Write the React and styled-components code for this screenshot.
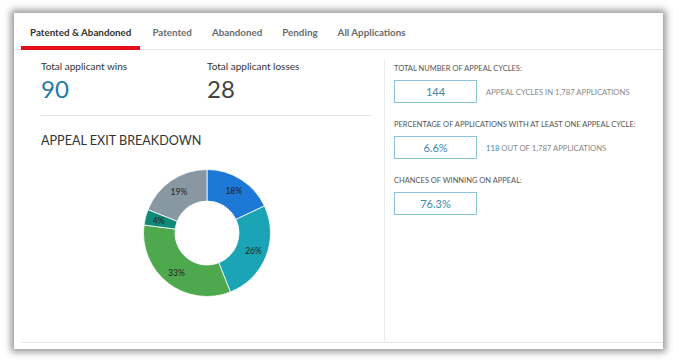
import React from "react"
import styled, { createGlobalStyle } from "styled-components"

const GlobalStyle = createGlobalStyle`
  html, body {
    margin: 0;
    padding: 0;
    background: #ffffff;
    font-family: Lato, "Liberation Sans", sans-serif;
  }
`;

const Page = styled.div`
  width: 678px;
  height: 360px;
  padding: 13px 15px 0 14px;
  box-sizing: border-box;
`;

const Card = styled.div`
  width: 649px;
  height: 336px;
  background: #fff;
  box-shadow: 0 0 7px 3px rgba(0, 0, 0, 0.42);
  display: flex;
  flex-direction: column;
  box-sizing: border-box;
  padding-bottom: 6px;
`;

const TabBar = styled.div`
  display: flex;
  height: 37px;
  padding-left: 7px;
  border-bottom: 1px solid #e6e6e6;
  box-sizing: border-box;
`;

const Tab = styled.div`
  position: relative;
  display: flex;
  align-items: center;
  padding: 1px ${({ first }) => (first ? "9px" : "10px")} 0;
  margin-right: ${({ first }) => (first ? "2px" : "0")};
  font-size: 9.8px;
  font-weight: 700;
  color: ${({ active }) => (active ? "#333" : "#6b6b6b")};
  white-space: nowrap;

  &::after {
    content: "";
    display: ${({ active }) => (active ? "block" : "none")};
    position: absolute;
    left: 0;
    right: 0;
    bottom: -1px;
    height: 4px;
    background: #e3101c;
  }
`;

const Content = styled.div`
  flex: 1;
  display: flex;
  margin-left: 7px;
  border-bottom: 1px solid #e8e8e8;
`;

const LeftCol = styled.div`
  flex: 0 0 363px;
  box-sizing: border-box;
  padding: 10px 12px 0 20px;
  display: flex;
  flex-direction: column;
`;

const StatRow = styled.div`
  display: flex;
`;

const Stat = styled.div`
  width: ${({ w }) => w}px;
`;

const StatLabel = styled.div`
  font-size: 10px;
  line-height: 12px;
  color: #333;
`;

const StatValue = styled.div`
  margin-top: 3px;
  font-size: 24px;
  line-height: 28px;
  color: ${({ tone }) => tone};
`;

const Divider = styled.div`
  margin-top: 12px;
  height: 1px;
  background: #e8e8e8;
`;

const SectionTitle = styled.div`
  margin-top: 17px;
  font-size: 12.6px;
  line-height: 16px;
  color: #333;
`;

const ChartWrap = styled.div`
  margin-top: 20px;
  display: flex;
  justify-content: center;
`;

const RightCol = styled.div`
  flex: 1;
  margin-top: 9px;
  border-left: 1px solid #ececec;
  padding: 5px 0 0 9px;
  display: flex;
  flex-direction: column;
  gap: 17px;
`;

const Metric = styled.div`
  display: flex;
  flex-direction: column;
  gap: 6px;
`;

const MetricLabel = styled.div`
  font-size: 7.5px;
  line-height: 10px;
  color: #555;
  text-transform: uppercase;
  white-space: nowrap;
`;

const MetricRow = styled.div`
  display: flex;
  align-items: center;
  gap: 9px;
`;

const ValueBox = styled.div`
  width: 83px;
  height: 23px;
  box-sizing: border-box;
  border: 1.5px solid #8cc4dc;
  display: flex;
  align-items: center;
  justify-content: center;
  font-size: 11px;
  color: #3b88b2;
`;

const Caption = styled.div`
  font-size: 7.7px;
  color: #8a8a8a;
  text-transform: uppercase;
  white-space: nowrap;
`;

const Accent = styled.span`
  color: #3b88b2;
`;

const slices = [
  { pct: 18, color: "#1e78d6" },
  { pct: 26, color: "#1ba4b6" },
  { pct: 33, color: "#4da84e" },
  { pct: 4, color: "#0f8a78" },
  { pct: 19, color: "#8898a2" },
];

function Donut() {
  const cx = 64, cy = 64, R = 63.5, r = 32;
  let acc = 0;
  const pt = (a, rad) => [cx + rad * Math.sin(a), cy - rad * Math.cos(a)];
  return (
    <svg width="128" height="128" viewBox="0 0 128 128">
      {slices.map((s, i) => {
        const a0 = (acc / 100) * Math.PI * 2;
        acc += s.pct;
        const a1 = (acc / 100) * Math.PI * 2;
        const large = a1 - a0 > Math.PI ? 1 : 0;
        const [x0, y0] = pt(a0, R);
        const [x1, y1] = pt(a1, R);
        const [x2, y2] = pt(a1, r);
        const [x3, y3] = pt(a0, r);
        const d = `M${x0},${y0} A${R},${R} 0 ${large} 1 ${x1},${y1} L${x2},${y2} A${r},${r} 0 ${large} 0 ${x3},${y3} Z`;
        const am = (a0 + a1) / 2;
        const [lx, ly] = pt(am, 50);
        return (
          <g key={i}>
            <path d={d} fill={s.color} stroke="#fff" strokeWidth="0.8" />
            <text x={lx} y={ly + 3} textAnchor="middle" fontSize="8.5" fill="#222" fontFamily="Lato, 'Liberation Sans', sans-serif">{s.pct}%</text>
          </g>
        );
      })}
    </svg>
  );
}

export default function App() {
  const tabs = ["Patented & Abandoned", "Patented", "Abandoned", "Pending", "All Applications"];
  return (
    <>
      <GlobalStyle />
      <Page>
        <Card>
          <TabBar>
            {tabs.map((t, i) => (
              <Tab key={t} active={i === 0} first={i === 0}>{t}</Tab>
            ))}
          </TabBar>
          <Content>
            <LeftCol>
              <StatRow>
                <Stat w={166}>
                  <StatLabel>Total applicant wins</StatLabel>
                  <StatValue tone="#1f7aa8">90</StatValue>
                </Stat>
                <Stat w={150}>
                  <StatLabel>Total applicant losses</StatLabel>
                  <StatValue tone="#444">28</StatValue>
                </Stat>
              </StatRow>
              <Divider />
              <SectionTitle>APPEAL EXIT BREAKDOWN</SectionTitle>
              <ChartWrap>
                <Donut />
              </ChartWrap>
            </LeftCol>
            <RightCol>
              <Metric>
                <MetricLabel>Total number of appeal cycles:</MetricLabel>
                <MetricRow>
                  <ValueBox>144</ValueBox>
                  <Caption>Appeal cycles in 1,787 applications</Caption>
                </MetricRow>
              </Metric>
              <Metric>
                <MetricLabel>Percentage of applications with at least one appeal cycle:</MetricLabel>
                <MetricRow>
                  <ValueBox>6.6%</ValueBox>
                  <Caption><Accent>118</Accent> out of 1,787 applications</Caption>
                </MetricRow>
              </Metric>
              <Metric>
                <MetricLabel>Chances of winning on appeal:</MetricLabel>
                <MetricRow>
                  <ValueBox>76.3%</ValueBox>
                </MetricRow>
              </Metric>
            </RightCol>
          </Content>
        </Card>
      </Page>
    </>
  )
}
